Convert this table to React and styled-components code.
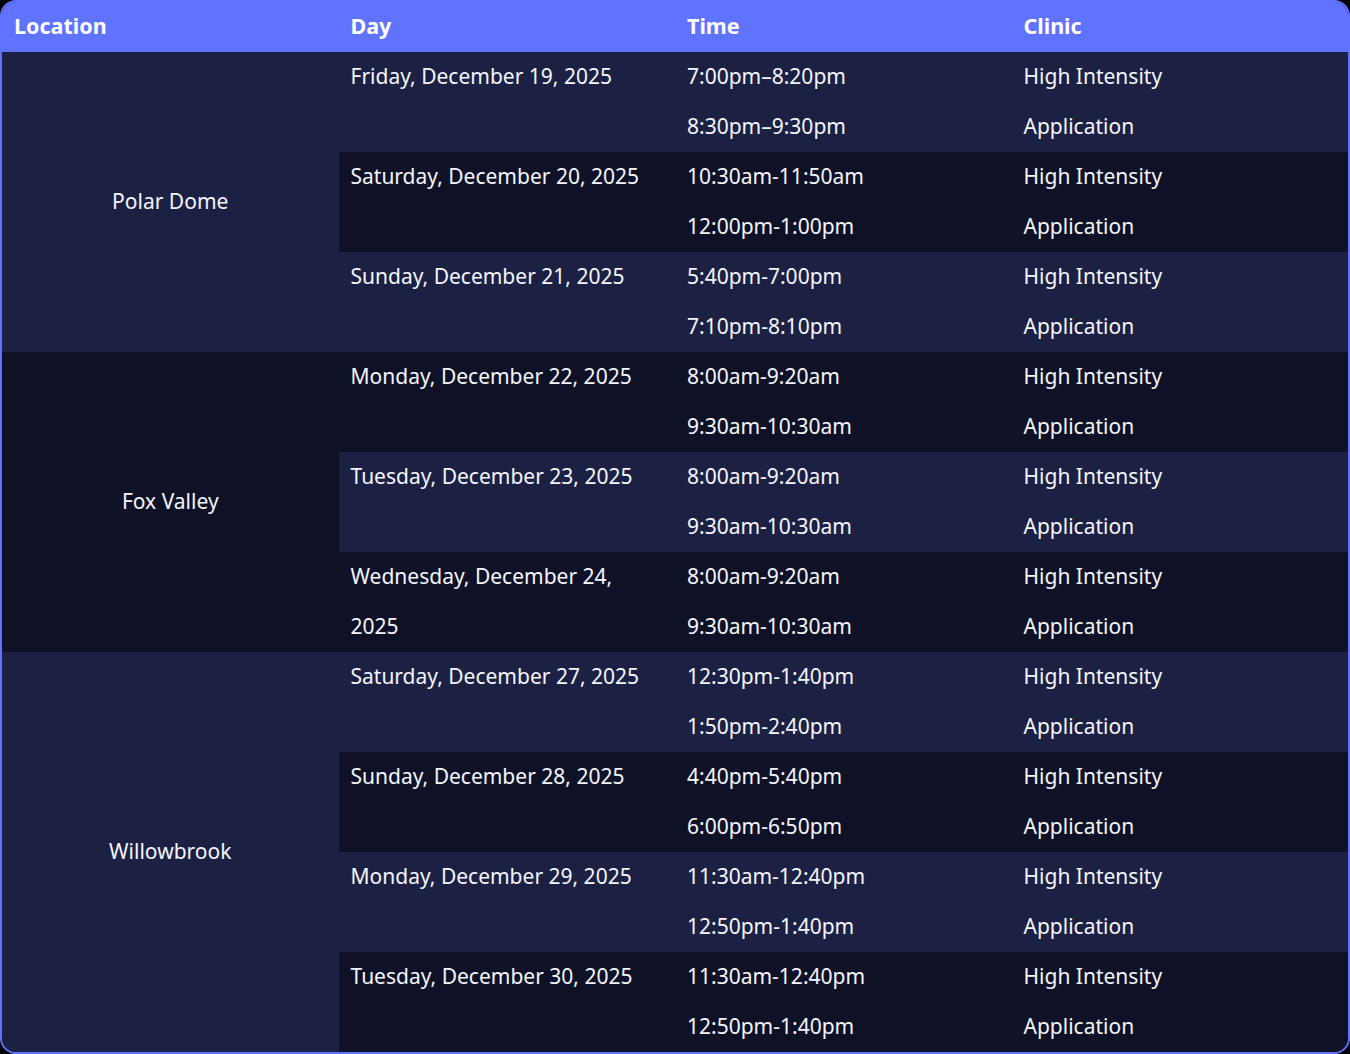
import React from "react";
import styled, { createGlobalStyle } from "styled-components";

const Global = createGlobalStyle`
  html, body { margin: 0; padding: 0; background: #000; }
  body { font-family: "Noto Sans", "Open Sans", sans-serif; }
`;

const Frame = styled.div`
  width: 1350px;
  box-sizing: border-box;
  border: 2px solid #5f73ff;
  border-radius: 16px;
  overflow: hidden;
  background: #1c2144;
`;

const Table = styled.table`
  width: 100%;
  border-collapse: collapse;
  table-layout: fixed;
  color: #f4f5ff;
  font-size: 21px;
`;

const Th = styled.th`
  background: #5f73ff;
  color: #fff;
  font-weight: 700;
  text-align: left;
  height: 50px;
  padding: 0 12px 2px;
  font-size: 21.5px;
  line-height: 46px;
  box-sizing: border-box;
`;

const Tr = styled.tr`
  background: ${(p) => (p.$dark ? "#0f1226" : "#1c2144")};
`;

const Td = styled.td`
  height: 50px;
  padding: ${(p) => (p.$top ? "0 12px" : "0 12px 2px")};
  line-height: 48px;
  vertical-align: ${(p) => (p.$top ? "top" : "middle")};
  text-align: ${(p) => (p.$center ? "center" : "left")};
  box-sizing: border-box;
`;

const DayText = styled.div`
  line-height: 50px;
  margin-top: -1px;
  margin-bottom: -1px;
`;

const data = [
  {
    loc: "Polar Dome",
    days: [
      ["Friday, December 19, 2025", "7:00pm–8:20pm", "8:30pm–9:30pm"],
      ["Saturday, December 20, 2025", "10:30am-11:50am", "12:00pm-1:00pm"],
      ["Sunday, December 21, 2025", "5:40pm-7:00pm", "7:10pm-8:10pm"],
    ],
  },
  {
    loc: "Fox Valley",
    days: [
      ["Monday, December 22, 2025", "8:00am-9:20am", "9:30am-10:30am"],
      ["Tuesday, December 23, 2025", "8:00am-9:20am", "9:30am-10:30am"],
      ["Wednesday, December 24, 2025", "8:00am-9:20am", "9:30am-10:30am"],
    ],
  },
  {
    loc: "Willowbrook",
    days: [
      ["Saturday, December 27, 2025", "12:30pm-1:40pm", "1:50pm-2:40pm"],
      ["Sunday, December 28, 2025", "4:40pm-5:40pm", "6:00pm-6:50pm"],
      ["Monday, December 29, 2025", "11:30am-12:40pm", "12:50pm-1:40pm"],
      ["Tuesday, December 30, 2025", "11:30am-12:40pm", "12:50pm-1:40pm"],
    ],
  },
];

export default function App() {
  let groupIndex = 0;
  const rows = [];
  data.forEach((loc) => {
    loc.days.forEach((d, di) => {
      const dark = groupIndex % 2 === 1;
      groupIndex++;
      rows.push(
        <Tr key={loc.loc + di + "a"} $dark={dark}>
          {di === 0 && (
            <Td rowSpan={loc.days.length * 2} $center>
              {loc.loc}
            </Td>
          )}
          <Td rowSpan={2} $top>
            <DayText>{d[0]}</DayText>
          </Td>
          <Td>{d[1]}</Td>
          <Td>High Intensity</Td>
        </Tr>
      );
      rows.push(
        <Tr key={loc.loc + di + "b"} $dark={dark}>
          <Td>{d[2]}</Td>
          <Td>Application</Td>
        </Tr>
      );
    });
  });

  return (
    <>
      <Global />
      <Frame>
        <Table>
          <colgroup>
            <col style={{ width: "25%" }} />
            <col style={{ width: "25%" }} />
            <col style={{ width: "25%" }} />
            <col style={{ width: "25%" }} />
          </colgroup>
          <thead>
            <tr>
              <Th>Location</Th>
              <Th>Day</Th>
              <Th>Time</Th>
              <Th>Clinic</Th>
            </tr>
          </thead>
          <tbody>{rows}</tbody>
        </Table>
      </Frame>
    </>
  );
}
